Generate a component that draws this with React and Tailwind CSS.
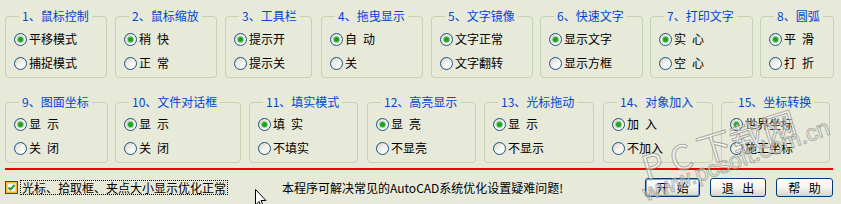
import React, { useState } from "react";

const row1 = [
  { t: "1、鼠标控制", w: "w-[102px]", ml: "ml-[5px]", opts: ["平移模式", "捕捉模式"] },
  { t: "2、鼠标缩放", w: "w-[102px]", ml: "ml-[8px]", opts: ["稍 快", "正 常"] },
  { t: "3、工具栏", w: "w-[87px]", ml: "ml-[8px]", opts: ["提示开", "提示关"] },
  { t: "4、拖曳显示", w: "w-[102px]", ml: "ml-[9px]", opts: ["自 动", "关"] },
  { t: "5、文字镜像", w: "w-[102px]", ml: "ml-[8px]", opts: ["文字正常", "文字翻转"] },
  { t: "6、快速文字", w: "w-[103px]", ml: "ml-[7px]", opts: ["显示文字", "显示方框"] },
  { t: "7、打印文字", w: "w-[103px]", ml: "ml-[7px]", opts: ["实 心", "空 心"] },
  { t: "8、圆弧", w: "w-[74px]", ml: "ml-[7px]", opts: ["平 滑", "打 折"] },
];

const row2 = [
  { t: "9、图面坐标", w: "w-[103px]", ml: "ml-[5px]", opts: ["显 示", "关 闭"] },
  { t: "10、文件对话框", w: "w-[126px]", ml: "ml-[7px]", opts: ["显 示", "关 闭"] },
  { t: "11、填实模式", w: "w-[109px]", ml: "ml-[8px]", opts: ["填 实", "不填实"] },
  { t: "12、高亮显示", w: "w-[109px]", ml: "ml-[9px]", opts: ["显 亮", "不显亮"] },
  { t: "13、光标拖动", w: "w-[110px]", ml: "ml-[8px]", opts: ["显 示", "不显示"] },
  { t: "14、对象加入", w: "w-[110px]", ml: "ml-[9px]", opts: ["加 入", "不加入"] },
  { t: "15、坐标转换", w: "w-[109px]", ml: "ml-[8px]", opts: ["世界坐标", "施工坐标"] },
];

// SimSun-like half width space between two characters
const wide = (s) => s.replace(/ /g, "\u2002");

function Radio({ checked }) {
  return (
    <span className="w-[13px] h-[13px] rounded-full border border-[#1c5180] bg-linear-to-br from-[#d4d2c8] via-[#f4f4f0] to-white flex items-center justify-center shrink-0">
      {checked && (
        <span className="w-[5px] h-[5px] rounded-full bg-[#21a121] shadow-[0_0_0_1px_#8fd68f]" />
      )}
    </span>
  );
}

function Group({ g, top }) {
  const [sel, setSel] = useState(0);
  return (
    <fieldset
      className={`${g.w} ${g.ml} shrink-0 border border-[#c3d3b0] rounded-[4px] pl-[8px] ${
        top ? "pt-[5px] pb-[2px]" : "pt-[4px] pb-[2px]"
      }`}
    >
      <legend className="ml-[5px] px-[3px] text-[12px] leading-[12px] text-[#0046d5] whitespace-nowrap">
        {g.t}
      </legend>
      {g.opts.map((o, i) => (
        <div
          key={o}
          onClick={() => setSel(i)}
          className="h-[24px] flex items-center gap-[2px] text-[12px] text-black whitespace-pre cursor-default"
        >
          <Radio checked={sel === i} />
          <span>{wide(o)}</span>
        </div>
      ))}
    </fieldset>
  );
}

function XpButton({ children, primary }) {
  return (
    <button
      className={`h-[19px] rounded-[3px] border border-[#003c74] bg-linear-to-b from-white via-[#f4f3ee] to-[#d8d5c8] text-[12px] leading-none text-black whitespace-pre ${
        primary ? "shadow-[inset_0_0_0_1px_#7aa4e4]" : "shadow-[inset_0_-1px_0_#d6d0c5]"
      }`}
    >
      {children}
    </button>
  );
}

export default function App() {
  const [opt, setOpt] = useState(true);
  return (
    <div
      className="relative w-[841px] h-[204px] overflow-hidden bg-[#e7e9d9] select-none"
      style={{ fontFamily: '"Noto Sans CJK SC", "Noto Sans", sans-serif' }}
    >
      <div className="flex mt-[10px]">
        {row1.map((g) => (
          <Group key={g.t} g={g} top />
        ))}
      </div>
      <div className="flex mt-[18px]">
        {row2.map((g) => (
          <Group key={g.t} g={g} />
        ))}
      </div>

      <div className="ml-[5px] mt-[5px] w-[828px] h-[2px] bg-[#f00000]" />

      <div className="flex items-center h-[19px] mt-[8px]">
        <span
          onClick={() => setOpt(!opt)}
          className="ml-[5px] w-[13px] h-[13px] shrink-0 border border-[#1c5180] bg-white flex items-center justify-center shadow-[inset_0_0_0_1px_#f8b636,inset_0_0_0_2px_#fcd27a]"
        >
          {opt && (
            <svg width="9" height="9" viewBox="0 0 9 9">
              <path d="M1.5 4.5 L3.5 6.5 L7.5 2" fill="none" stroke="#21a121" strokeWidth="2" />
            </svg>
          )}
        </span>
        <span className="ml-[2px] h-[15px] shrink-0 border border-dotted border-black flex items-center px-[1px] text-[12px] text-black whitespace-nowrap">
          光标、拾取框、夹点大小显示优化正常
        </span>
        <span className="ml-[54px] text-[12px] text-black whitespace-nowrap">
          本程序可解决常见的AutoCAD系统优化设置疑难问题!
        </span>
        <div className="ml-auto mr-[8px] flex gap-[10px]">
          <div className="w-[55px] flex flex-col">
            <XpButton primary>{"开\u2002 始"}</XpButton>
          </div>
          <div className="w-[56px] flex flex-col">
            <XpButton>{"退\u2002 出"}</XpButton>
          </div>
          <div className="w-[57px] flex flex-col">
            <XpButton>{"帮\u2002 助"}</XpButton>
          </div>
        </div>
      </div>

      {/* mouse cursor */}
      <svg className="absolute left-[255px] top-[189px]" width="13" height="20" viewBox="0 0 13 20">
        <path d="M0.5 0.5 L0.5 16 L4 12.5 L6.5 18.5 L8.5 17.5 L6 11.5 L11 11.5 Z" fill="white" stroke="black" strokeWidth="1" />
      </svg>

      {/* watermark */}
      <div className="absolute left-[648px] top-[148px] origin-bottom-left -rotate-[17deg] text-[34px] leading-[38px] whitespace-pre text-white/50 [-webkit-text-stroke:1px_rgba(120,120,120,0.6)] pointer-events-none">
        {"P C\u2009下载网"}
      </div>
      <div
        className="absolute left-[648px] top-[180px] origin-bottom-left -rotate-[20deg] text-[23px] leading-[26px] whitespace-pre text-white/50 [-webkit-text-stroke:1px_rgba(120,120,120,0.55)] pointer-events-none"
        style={{ fontFamily: '"Liberation Sans", sans-serif' }}
      >
        www.pcsoft.com.cn
      </div>
    </div>
  );
}
